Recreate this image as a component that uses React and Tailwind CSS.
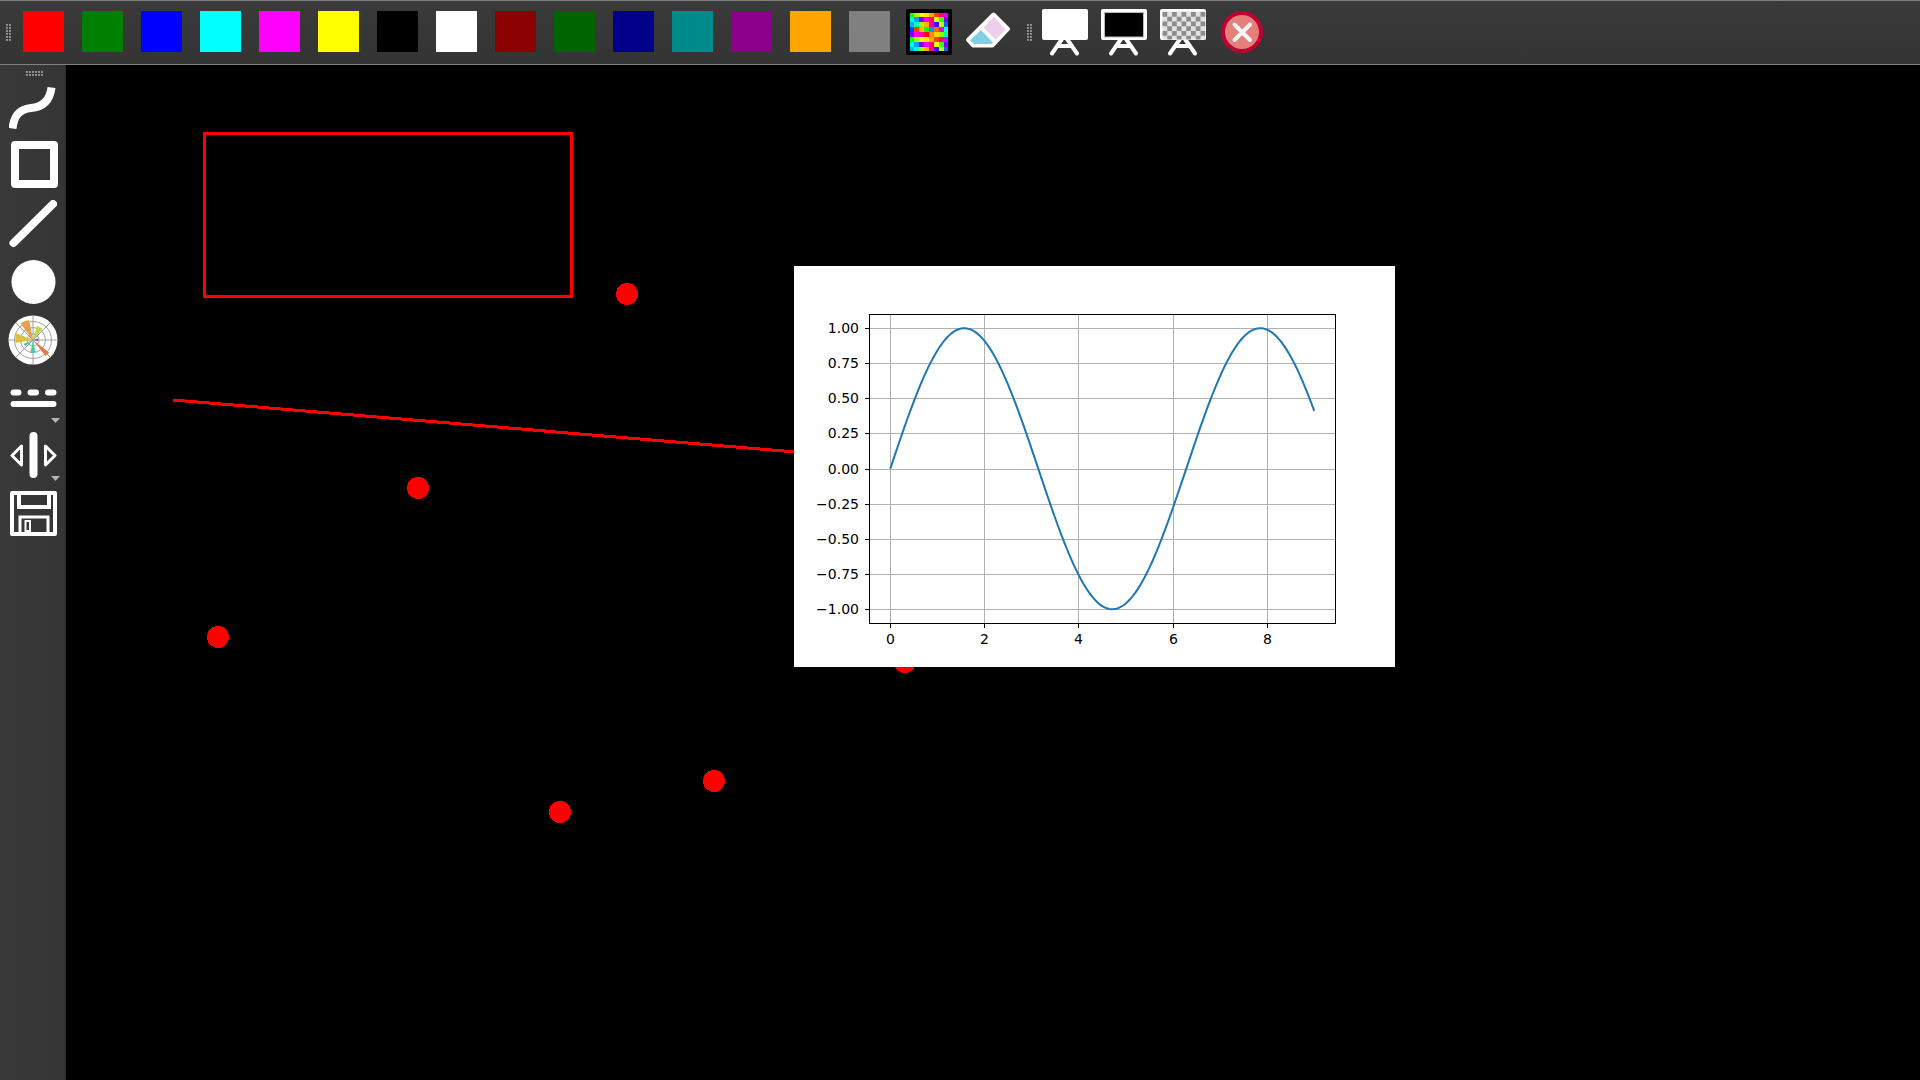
import { useState } from 'react';

const COLORS = [
  { name: 'Red', cls: 'bg-[#ff0000]' },
  { name: 'Green', cls: 'bg-[#008000]' },
  { name: 'Blue', cls: 'bg-[#0000ff]' },
  { name: 'Cyan', cls: 'bg-[#00ffff]' },
  { name: 'Magenta', cls: 'bg-[#ff00ff]' },
  { name: 'Yellow', cls: 'bg-[#ffff00]' },
  { name: 'Black', cls: 'bg-black' },
  { name: 'White', cls: 'bg-white' },
  { name: 'Dark red', cls: 'bg-[#8b0000]' },
  { name: 'Dark green', cls: 'bg-[#006400]' },
  { name: 'Dark blue', cls: 'bg-[#00008b]' },
  { name: 'Dark cyan', cls: 'bg-[#008b8b]' },
  { name: 'Dark magenta', cls: 'bg-[#8b008b]' },
  { name: 'Orange', cls: 'bg-[#ffa500]' },
  { name: 'Gray', cls: 'bg-[#808080]' },
];

const PALETTE = [
  ['#00ff1e', '#a6ff00', '#f5ff00', '#ffe600', '#ffa600', '#ff4000', '#ff0080', '#d400ff'],
  ['#00ffe1', '#00a2ff', '#7b00ff', '#ff00ea', '#ff0062', '#f2ff00', '#33ff00', '#7700ff'],
  ['#00b3ff', '#00ffb7', '#a6ff00', '#ffb300', '#ff0099', '#4400ff', '#b7ff00', '#0062ff'],
  ['#0040ff', '#ff3c00', '#ffbf00', '#1aff00', '#0090ff', '#ff6a00', '#e600ff', '#00fff2'],
  ['#8000ff', '#ff00e1', '#ff00aa', '#ff0022', '#ff8c00', '#ffd500', '#80ff00', '#00ff9d'],
  ['#00ff1e', '#a6ff00', '#f5ff00', '#ffe600', '#ffa600', '#ff4000', '#ff0080', '#d400ff'],
  ['#00ffe1', '#00a2ff', '#7b00ff', '#ff00ea', '#ff0062', '#f2ff00', '#33ff00', '#7700ff'],
  ['#00b3ff', '#00ffb7', '#a6ff00', '#ffb300', '#ff0099', '#4400ff', '#b7ff00', '#0062ff'],
];

function Handle({ vertical }) {
  const cols = vertical ? 2 : 6;
  const rows = vertical ? 6 : 2;
  const dots = [];
  for (let r = 0; r < rows; r++) {
    for (let c = 0; c < cols; c++) dots.push([c * 3, r * 3]);
  }
  return (
    <svg width={cols * 3} height={rows * 3} shapeRendering="crispEdges" className="block shrink-0">
      {dots.map(([x, y]) => (
        <g key={`${x}-${y}`}>
          <rect x={x} y={y} width="2" height="2" fill="#8a8a8a" />
          <rect x={x} y={y} width="1" height="1" fill="#9a9a9a" />
        </g>
      ))}
    </svg>
  );
}

function PaletteIcon() {
  return (
    <svg width="46" height="46" viewBox="0 0 46 46">
      <g shapeRendering="crispEdges">
        {PALETTE.map((row, r) =>
          row.map((c, i) => (
            <rect key={`${r}-${i}`} x={3 + i * 5} y={3 + r * 5} width="5" height="5" fill={c} />
          ))
        )}
      </g>
      <rect x="2" y="2" width="42" height="42" fill="none" stroke="#000" strokeWidth="4" strokeLinejoin="round" />
    </svg>
  );
}

function EraserIcon() {
  return (
    <svg width="46" height="46" viewBox="0 0 46 46">
      <path d="M28.5 5.5 43 20 27.5 36.5H8L3 31Z" fill="#fff" stroke="#fff" strokeWidth="4" strokeLinejoin="round" />
      <path d="M29 8 40.5 20.5 30.5 30.5 18.5 18.5Z" fill="#edcfeb" />
      <path d="M16 21 28 33.5 26.5 35H9L5 31.5Z" fill="#7fd0e6" />
    </svg>
  );
}

function BoardIcon({ kind }) {
  const cells = [];
  if (kind === 'clear') {
    for (let r = 0; r < 6; r++) {
      for (let c = 0; c < 9; c++) {
        if ((r + c) % 2 === 0) cells.push([c, r]);
      }
    }
  }
  return (
    <svg width="46" height="48" viewBox="0 0 46 48">
      <path d="M20 31 10 45.5M25 31 35 45.5M15 38H30" stroke="#fff" strokeWidth="4" strokeLinecap="round" />
      <rect width="46" height="31" y="1" rx="2" fill="#fff" />
      {kind === 'black' && <rect x="3.5" y="4.5" width="39" height="24.5" fill="#000" stroke="#bbb" strokeWidth="1" />}
      {kind === 'clear' && (
        <>
          <rect x="2.5" y="3.5" width="43" height="28" fill="#e2e2e2" />
          {cells.map(([c, r]) => (
            <rect key={`${c}-${r}`} x={2.5 + c * 4.75} y={4 + r * 4.75} width="4.75" height={r === 5 ? 3.7 : 4.75} fill="#8c8c8c" />
          ))}
        </>
      )}
    </svg>
  );
}

function CloseIcon() {
  return (
    <svg width="42" height="42" viewBox="0 0 42 42">
      <circle cx="21" cy="21" r="19" fill="#e57f7c" stroke="#bf0032" strokeWidth="4" />
      <path d="M13.5 13.5 29 29M29 13.5 13.5 29" stroke="#f6f6f6" strokeWidth="4" strokeLinecap="round" />
    </svg>
  );
}

function CurveIcon() {
  return (
    <svg width="48" height="48" viewBox="0 0 48 48" fill="none">
      <path d="M3.5 44.5C5 31 11 25 22 24C34 23 41 16 42.5 3.5" stroke="#fff" strokeWidth="8" />
    </svg>
  );
}

function RectIcon() {
  return (
    <svg width="50" height="50" viewBox="0 -1 50 50" fill="none">
      <rect x="7" y="3" width="39" height="39" stroke="#fff" strokeWidth="8" strokeLinejoin="round" />
    </svg>
  );
}

function LineIcon() {
  return (
    <svg width="48" height="48" viewBox="0 0 48 48">
      <path d="M4.5 43 44 4" stroke="#fff" strokeWidth="8" strokeLinecap="round" />
    </svg>
  );
}

function PointIcon() {
  return (
    <svg width="48" height="48" viewBox="0 0 48 48">
      <circle cx="24.5" cy="24" r="22" fill="#fff" />
    </svg>
  );
}

function PlotIcon() {
  return (
    <svg width="50" height="50" viewBox="0 0 50 50">
      <circle cx="25" cy="25" r="24.5" fill="#fff" />
      <g fill="none" stroke="#a0a0a0" strokeWidth="1">
        <circle cx="25" cy="25" r="6" />
        <circle cx="25" cy="25" r="12.5" />
        <circle cx="25" cy="25" r="18.5" />
        <path d="M25 1V49M1 25H49M8 8 42 42M42 8 8 42" />
      </g>
      <path d="M25 25 12.5 8.5Q16 5.5 21 5Z" fill="#e5a04b" />
      <path d="M25 25 7.5 28V18Z" fill="#dcc040" />
      <path d="M25 25 29 11 34.5 13.5Z" fill="#bfd645" />
      <path d="M25 25 41 37.5 37.5 41Z" fill="#e07a48" />
      <path d="M25 25 27.5 38H22.5Z" fill="#47cfa0" />
      <path d="M25 25 17 31 15.5 29Z" fill="#45c4b8" />
      <path d="M25 25 30 23.5V26Z" fill="#6a5fc0" />
    </svg>
  );
}

function DashIcon() {
  return (
    <svg width="48" height="48" viewBox="0 0 48 48">
      <path d="M4.5 18.5H9.5M21.5 18.5H27M39 18.5H44.5M4.5 30H44.5" stroke="#fff" strokeWidth="6" strokeLinecap="round" />
    </svg>
  );
}

function WidthIcon() {
  return (
    <svg width="48" height="48" viewBox="0 0 48 48" fill="none" stroke="#fff">
      <path d="M24.5 4V42" strokeWidth="8" strokeLinecap="round" />
      <path d="M12.5 14V33L3 23.5ZM36.5 14V33L46 23.5Z" strokeWidth="3" strokeLinejoin="round" />
    </svg>
  );
}

function SaveIcon() {
  return (
    <svg width="48" height="48" viewBox="0 0 48 48" fill="none" stroke="#fff">
      <rect x="3" y="3" width="43" height="41" strokeWidth="4" strokeLinejoin="round" />
      <path d="M10 4V17H40V4" strokeWidth="4" />
      <path d="M11 43V27H39V43" strokeWidth="3" />
      <rect x="16.5" y="31" width="4.5" height="10" strokeWidth="2" />
    </svg>
  );
}

const TOOLS = [
  { name: 'Freehand', Icon: CurveIcon },
  { name: 'Rectangle', Icon: RectIcon },
  { name: 'Line', Icon: LineIcon },
  { name: 'Point', Icon: PointIcon },
  { name: 'Plot', Icon: PlotIcon },
  { name: 'Line style', Icon: DashIcon, menu: true },
  { name: 'Line width', Icon: WidthIcon, menu: true },
  { name: 'Save', Icon: SaveIcon },
];

function ToolButton({ label, onClick, children }) {
  return (
    <button aria-label={label} onClick={onClick} className="flex h-12 w-[59px] shrink-0 items-center justify-center">
      {children}
    </button>
  );
}

// Tick positions inside the figure
const X_TICKS = [[0, 96.5], [2, 190.5], [4, 284.5], [6, 379.5], [8, 473.5]];
const Y_TICKS = [
  ['1.00', 62.5], ['0.75', 97.5], ['0.50', 132.5], ['0.25', 167.5], ['0.00', 203.5],
  ['−0.25', 238.5], ['−0.50', 273.5], ['−0.75', 308.5], ['−1.00', 343.5],
];

function SinePlot() {
  const points = [];
  for (let i = 0; i <= 180; i++) {
    const t = i / 20;
    points.push(`${(96.3 + t * 47.1).toFixed(2)},${(202.7 - Math.sin(t) * 140.5).toFixed(2)}`);
  }
  return (
    <svg width="601" height="401" viewBox="0 0 601 401" className="block font-['DejaVu_Sans',sans-serif] text-[14px]">
      {X_TICKS.map(([label, x]) => (
        <g key={label}>
          <path d={`M${x} 49V357`} stroke="#b0b0b0" />
          <path d={`M${x} 357V362`} stroke="#000" />
          <text x={x} y="378" textAnchor="middle">{label}</text>
        </g>
      ))}
      {Y_TICKS.map(([label, y]) => (
        <g key={label}>
          <path d={`M76 ${y}H541`} stroke="#b0b0b0" />
          <path d={`M71 ${y}H76`} stroke="#000" />
          <text x="65" y={y + 4.5} textAnchor="end">{label}</text>
        </g>
      ))}
      <polyline points={points.join(' ')} fill="none" stroke="#1f77b4" strokeWidth="2" />
      <rect x="75.5" y="48.5" width="466" height="309" fill="none" stroke="#000" />
    </svg>
  );
}

const DOTS = [[561, 229], [352, 423], [152, 572], [839, 597], [648, 716], [494, 747]];

export default function App() {
  const [board, setBoard] = useState('black');

  return (
    <div className="flex min-h-screen flex-col bg-black">
      <header className="flex h-[65px] items-center gap-1 border-y border-[#808080] bg-linear-to-b from-[#3a3a3a] to-[#343434] pb-px">
        <div role="toolbar" aria-label="Colors" className="flex items-center">
          <div className="flex w-3.5 justify-end pt-0.5 pr-0.5">
            <Handle vertical />
          </div>
          {COLORS.map(({ name, cls }) => (
            <ToolButton key={name} label={name}>
              <span className={`mb-px size-[41px] ${cls}`} />
            </ToolButton>
          ))}
          <ToolButton label="Custom color"><PaletteIcon /></ToolButton>
          <ToolButton label="Eraser"><EraserIcon /></ToolButton>
        </div>
        <div role="toolbar" aria-label="Boards" className="flex items-center">
          <div className="flex w-3.5 justify-end pt-0.5 pr-0.5">
            <Handle vertical />
          </div>
          <ToolButton label="Whiteboard" onClick={() => setBoard('white')}><BoardIcon kind="white" /></ToolButton>
          <ToolButton label="Blackboard" onClick={() => setBoard('black')}><BoardIcon kind="black" /></ToolButton>
          <ToolButton label="Transparent board" onClick={() => setBoard('clear')}><BoardIcon kind="clear" /></ToolButton>
          <ToolButton label="Close"><CloseIcon /></ToolButton>
        </div>
      </header>

      <div className="flex flex-1">
        <aside role="toolbar" aria-label="Tools" className="flex w-[66px] shrink-0 flex-col items-center border-r border-[#2a2a2a] bg-linear-to-r from-[#393939] to-[#353535] pt-1.5">
          <div className="pl-[5px]">
            <Handle />
          </div>
          <div className="flex flex-col pt-0.5">
            {TOOLS.map(({ name, Icon, menu }) => (
              <button key={name} aria-label={name} className="relative flex h-[58px] w-[65px] items-center justify-center">
                <Icon />
                {menu && (
                  <svg width="9" height="5" viewBox="0 0 9 5" className="absolute right-[5px] bottom-1">
                    <path d="M0 0H9L4.5 5Z" fill="#b4b4b4" />
                  </svg>
                )}
              </button>
            ))}
          </div>
        </aside>

        <main className={`relative min-w-0 flex-1 overflow-hidden ${board === 'white' ? 'bg-white' : 'bg-black'}`}>
          <svg className="absolute inset-0 size-full" shapeRendering="crispEdges">
            <rect x="138.5" y="68.5" width="367" height="163" fill="none" stroke="#f00" strokeWidth="3" />
            <path d="M107 335 730 387" stroke="#f00" strokeWidth="3" />
            {DOTS.map(([x, y]) => (
              <circle key={x} cx={x} cy={y} r="11" fill="#f00" />
            ))}
          </svg>
          <div className="absolute top-[201px] left-[728px] bg-white">
            <SinePlot />
          </div>
        </main>
      </div>
    </div>
  );
}
